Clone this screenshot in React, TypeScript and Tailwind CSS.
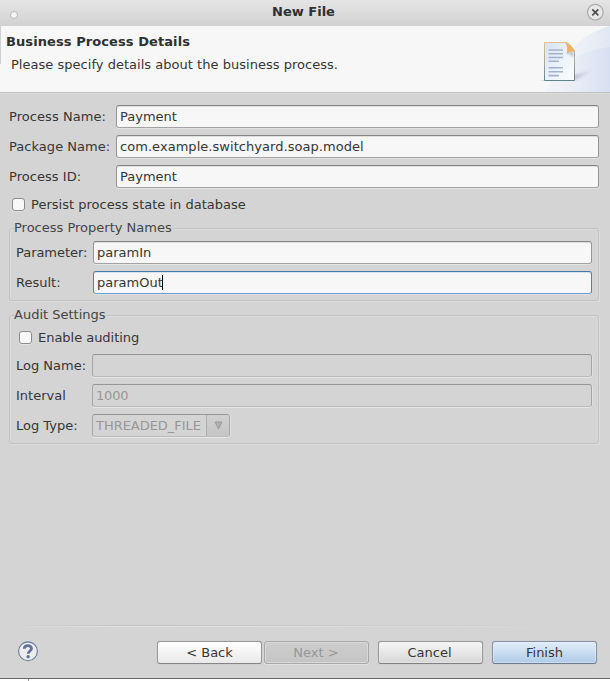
import React from "react";

const FIELD =
  "h-[23px] rounded-[3px] border border-t-[#858585] border-x-[#969696] border-b-[#a2a2a2] bg-[#f7f7f7] shadow-[0_1px_0_#e3e3e3,inset_0_1px_0_#dedede] pl-[3px] leading-[21px] whitespace-pre";
const FOCUSED =
  "h-[23px] rounded-[3px] border border-t-[#4a76ab] border-x-[#5180b8] border-b-[#6a9bd2] bg-[#f7f7f7] shadow-[0_1px_0_#dfe1e4,inset_0_1px_0_#d8e2ee] pl-[3px] leading-[21px] whitespace-pre";
const DISABLED =
  "h-[23px] rounded-[3px] border border-t-[#959595] border-x-[#a6a6a6] border-b-[#bcbcbc] bg-[#d4d4d4] shadow-[0_1px_0_#e6e6e6,1px_0_0_#e0e0e0] pl-[3px] leading-[21px] text-[#979797] whitespace-pre";

function Row({ label, width, children }: { label: string; width: string; children: React.ReactNode }) {
  return (
    <div className="flex h-[23px]">
      <label className={`${width} shrink-0 whitespace-nowrap leading-[23px]`}>{label}</label>
      {children}
    </div>
  );
}

function Check({ label }: { label: string }) {
  return (
    <div className="flex h-[13px] items-center gap-[6px]">
      <span className="size-[13px] rounded-[3px] border border-[#8b8b8b] bg-[#f8f8f8] shadow-[0_1px_0_#e2e2e2]" />
      <span className="leading-[13px]">{label}</span>
    </div>
  );
}

function Group({ title, className, children }: { title: string; className: string; children: React.ReactNode }) {
  return (
    <section className={`${className} rounded-[3px] border border-[#c3c3c3] px-[6px] shadow-[inset_1px_1px_0_#dcdcdc,1px_1px_0_#dcdcdc]`}>
      <h2 className="-ml-[2px] -mt-[9px] h-[16px] w-fit bg-[#d4d4d4] leading-[16px] text-[#454545]">{title}</h2>
      {children}
    </section>
  );
}

function Banner() {
  return (
    <svg width="110" height="66" viewBox="500 26 110 66" className="shrink-0">
      <defs>
        <linearGradient id="wave" gradientUnits="userSpaceOnUse" x1="545" y1="0" x2="610" y2="0">
          <stop offset="0" stopColor="#f4f6fa" stopOpacity="0.4" />
          <stop offset="1" stopColor="#e0e7f4" />
        </linearGradient>
        <linearGradient id="wave2" gradientUnits="userSpaceOnUse" x1="560" y1="0" x2="610" y2="0">
          <stop offset="0" stopColor="#e4eaf6" stopOpacity="0.3" />
          <stop offset="1" stopColor="#d5def1" />
        </linearGradient>
        <linearGradient id="page" x1="0" y1="0" x2="1" y2="1">
          <stop offset="0" stopColor="#d9e2f3" />
          <stop offset="0.6" stopColor="#edf4fc" />
          <stop offset="1" stopColor="#fafdff" />
        </linearGradient>
        <linearGradient id="edge" x1="0" y1="0" x2="0" y2="1">
          <stop offset="0" stopColor="#e3c08c" />
          <stop offset="0.5" stopColor="#a8aa98" />
          <stop offset="1" stopColor="#5d848b" />
        </linearGradient>
        <linearGradient id="shade" x1="0" y1="0" x2="1" y2="0">
          <stop offset="0" stopColor="#b3b0c4" stopOpacity="0.7" />
          <stop offset="1" stopColor="#c8cbe0" stopOpacity="0" />
        </linearGradient>
        <filter id="soft" x="-20%" y="-30%" width="140%" height="160%">
          <feGaussianBlur stdDeviation="1" />
        </filter>
      </defs>
      <path d="M545 92C556 62 578 34 610 26V92Z" fill="url(#wave)" />
      <path d="M545 92C560 62 583 50 610 47V92Z" fill="url(#wave2)" opacity="0.8" />
      <path d="M574 75L595 68.500C590 73 582 78 574 80.500Z" fill="url(#shade)" filter="url(#soft)" />
      <path d="M541 80.500H574" stroke="#b6bcc4" strokeWidth="1" opacity="0.35" />
      <path d="M544.500 42.500H566L574.500 51V80.500H544.500Z" fill="url(#page)" stroke="url(#edge)" />
      <path d="M569 50.500L574 52.500V57L567.500 53.500Z" fill="#7e858e" opacity="0.4" filter="url(#soft)" />
      <path d="M565.500 42.300C568 42.300 574.200 48.500 574.200 51.500C571.500 50.500 569.500 51.500 567 53.500C568.300 49 567.500 45 565.500 42.300Z" fill="#f3b05c" stroke="#dea262" strokeWidth="0.500" />
      <path d="M548.500 50H563M548.500 53.700H563M548.500 57.500H563M548.500 61.300H559M548.500 67.800H563M548.500 71.700H563M548.500 75.600H559" stroke="#a3b1cd" strokeWidth="1.600" />
    </svg>
  );
}

export default function App() {
  return (
    <div className="flex h-[681px] w-[610px] flex-col overflow-hidden bg-white font-['DejaVu_Sans','Verdana',sans-serif] text-[13px] text-[#363636]">
      <header className="flex h-[26px] shrink-0 items-center justify-between bg-linear-to-b from-[#e5e5e5] to-[#d1d1d1] pl-[10px] pr-[6px]">
        <span className="mt-[3px] size-[8px] rounded-full border border-[#b9b9b9] bg-[#f6f6f6]" />
        <h1 className="ml-[3px] -mt-[3px] font-bold leading-[16px] text-[#303030]">New File</h1>
        <svg width="18" height="18" viewBox="0 0 18 18" className="-mt-[2px]">
          <circle cx="9.300" cy="9.200" r="7.800" fill="#e7e7e7" stroke="#aaaaaa" strokeWidth="1.200" />
          <path d="M6.300 6.400L12.300 12.400M12.300 6.400L6.300 12.400" stroke="#4d4d4d" strokeWidth="1.700" />
        </svg>
      </header>

      <div className="flex h-[66px] shrink-0 justify-between bg-[#f7f7f7]">
        <div className="h-[38px] w-px bg-[#cfcfcf]" />
        <div className="grow pl-[5px] pt-[7px]">
          <h2 className="font-bold leading-[17px] tracking-[0.08px] text-[#303030]">Business Process Details</h2>
          <p className="pl-[5px] pt-[6px] leading-[17px] tracking-[0.025px]">Please specify details about the business process.</p>
        </div>
        <Banner />
      </div>

      <main className="flex grow flex-col border-b border-t border-b-[#666666] border-t-[#bfbfbf] bg-[#d4d4d4] shadow-[inset_0_1px_0_#dddddd]">
        <div className="flex flex-col gap-[7px] pl-[9px] pr-[11px] pt-[12px]">
          <Row label="Process Name:" width="w-[107px] tracking-[0.06px]"><div className={`${FIELD} grow tracking-normal`}>Payment</div></Row>
          <Row label="Package Name:" width="w-[107px] tracking-[0.04px]"><div className={`${FIELD} grow tracking-[0.045px]`}>com.example.switchyard.soap.model</div></Row>
          <Row label="Process ID:" width="w-[107px] tracking-[0.04px]"><div className={`${FIELD} grow tracking-normal`}>Payment</div></Row>
        </div>
        <div className="pl-[12px] pt-[10px] tracking-[0.01px]"><Check label="Persist process state in database" /></div>

        <Group title="Process Property Names" className="ml-[9px] mr-[11px] mt-[17px] h-[73px]">
          <div className="flex flex-col gap-[7px] pt-[5px]">
            <Row label="Parameter:" width="w-[77px] tracking-[-0.04px]"><div className={`${FIELD} grow`}>paramIn</div></Row>
            <Row label="Result:" width="w-[77px]">
              <div className={`${FOCUSED} flex grow items-center`}>paramOut<span className="-ml-px h-[15px] w-px bg-black" /></div>
            </Row>
          </div>
        </Group>

        <Group title="Audit Settings" className="ml-[9px] mr-[11px] mt-[14px] h-[129px]">
          <div className="pl-[3px] pt-[8px] tracking-[-0.03px]"><Check label="Enable auditing" /></div>
          <div className="flex flex-col gap-[7px] pt-[10px]">
            <Row label="Log Name:" width="w-[76px]"><div className={`${DISABLED} grow`} /></Row>
            <Row label="Interval" width="w-[76px]"><div className={`${DISABLED} grow tracking-[-0.2px]`}>1000</div></Row>
            <Row label="Log Type:" width="w-[76px]">
              <div className={`${DISABLED} flex w-[138px] justify-between`}>
                <span className="tracking-[-0.04px]">THREADED_FILE</span>
                <span className="flex w-[23px] items-center justify-center rounded-r-[2px] border-l border-[#adadad] bg-linear-to-b from-[#d0d0d0] to-[#c5c5c5]">
                  <svg width="9" height="9" viewBox="0 0 9 9"><path d="M1 1H8L4.500 8Z" fill="#b0b0b0" stroke="#999999" /></svg>
                </span>
              </div>
            </Row>
          </div>
        </Group>

        <footer className="mt-auto">
          <div className="mx-[5px] h-px bg-linear-to-r from-transparent via-[#c3c3c3] via-20% to-transparent" />
          <div className="mx-[5px] h-px bg-linear-to-r from-transparent via-[#e2e2e2] via-20% to-transparent" />
          <div className="flex h-[51px] items-start pl-[18px] pt-[14px]">
            <svg width="20" height="21" viewBox="0 0 20 21">
              <circle cx="10" cy="10.300" r="9.400" fill="#ededed" stroke="#6679a0" strokeWidth="1.100" />
              <path d="M6.300 7.800C6.300 3.600 13.500 3.700 13.500 7.500C13.500 10 10.200 10 10.200 12.800" fill="none" stroke="#5f7396" strokeWidth="2.800" />
              <circle cx="10.100" cy="15.800" r="1.700" fill="#5f7396" />
            </svg>
            <button className="ml-[119px] h-[23px] w-[105px] rounded-[3px] border border-[#999999] border-b-[#858585] bg-linear-to-b from-[#ffffff] to-[#e9e9e9] leading-[21px] shadow-[0_0_1px_#a8a8a8]">&lt; Back</button>
            <button className="ml-[2px] h-[23px] w-[105px] rounded-[3px] border border-[#a8a8a8] bg-linear-to-b from-[#cecece] to-[#c4c4c4] pr-px leading-[21px] text-[#979797] shadow-[inset_0_0_0_1px_#d9d9d9,0_1px_0_#e0e0e0]">Next &gt;</button>
            <button className="ml-[9px] h-[23px] w-[105px] rounded-[3px] border border-[#999999] border-b-[#808080] bg-linear-to-b from-[#f6f6f6] to-[#d7d7d7] pr-[2px] leading-[21px] shadow-[inset_0_0_0_1px_#f0f0f080,0_0_1px_#a8a8a8]">Cancel</button>
            <button className="ml-[9px] h-[23px] w-[105px] rounded-[3px] border border-[#8392a3] border-b-[#6b7b8c] bg-linear-to-b from-[#e3edf9] to-[#b0cbe8] leading-[21px] shadow-[inset_0_0_0_1px_#e8f2ff80,0_0_1px_#a8a8a8]">Finish</button>
          </div>
        </footer>
      </main>
      <div className="h-[2px] shrink-0 bg-white pl-[28px]"><div className="h-full w-px bg-[#999999]" /></div>
    </div>
  );
}
